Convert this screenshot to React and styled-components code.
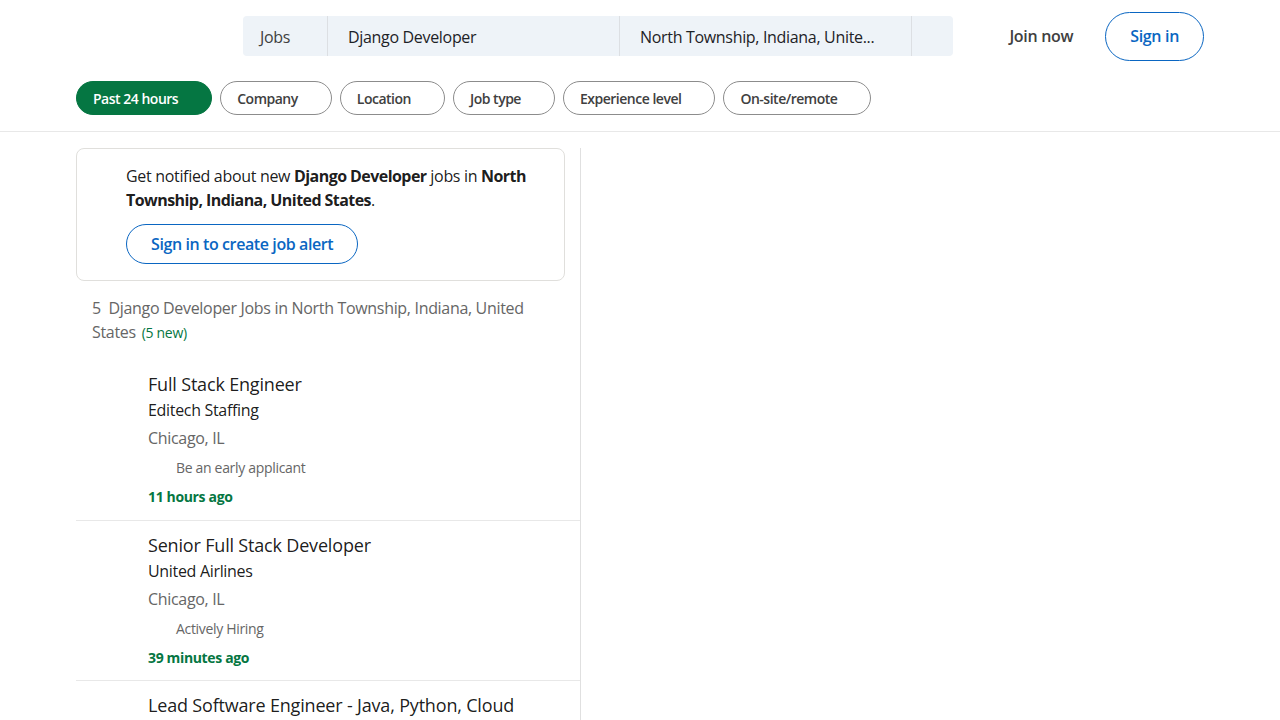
import styled, { createGlobalStyle } from "styled-components";

const GlobalStyle = createGlobalStyle`
  * { box-sizing: border-box; }
  body {
    margin: 0;
    background: #ffffff;
    font-family: "Open Sans", "Noto Sans", sans-serif;
    letter-spacing: -0.02em;
    color: rgba(0, 0, 0, 0.9);
  }
`;

const Page = styled.div`
  width: 1280px;
  min-height: 720px;
  overflow: hidden;
`;

const TopBar = styled.header`
  border-bottom: 1px solid #e8e8e8;
  padding: 0 76px 16px;
`;

const NavRow = styled.div`
  height: 72px;
  display: flex;
  align-items: center;
`;

const LogoSlot = styled.div`
  width: 167px;
  flex-shrink: 0;
`;

const SearchBar = styled.div`
  width: 710px;
  height: 40px;
  display: flex;
  background: #eef3f8;
  border-radius: 4px;
`;

const SearchField = styled.div`
  width: ${(p) => p.$w}px;
  flex-shrink: 0;
  display: flex;
  align-items: center;
  padding: 2px ${(p) => p.$pad}px 0;
  font-size: 16px;
  color: ${(p) => (p.$muted ? "#404040" : "#1d2226")};
  border-right: ${(p) => (p.$last ? "none" : "1px solid #dcdfe3")};
  white-space: nowrap;
  overflow: hidden;

  span {
    overflow: hidden;
    text-overflow: ellipsis;
  }
`;

const Spacer = styled.div`
  flex: 1;
`;

const JoinLink = styled.a`
  padding: 12px 24px;
  font-size: 16px;
  font-weight: 600;
  color: #404040;
  text-decoration: none;
`;

const SignInButton = styled.button`
  margin-left: 8px;
  height: 49px;
  padding: 0 24px;
  border: 1px solid #0a66c2;
  border-radius: 25px;
  background: #fff;
  color: #0a66c2;
  font-family: inherit;
  font-size: 16px;
  font-weight: 600;
  letter-spacing: -0.02em;
`;

const Filters = styled.div`
  margin-top: 9px;
  display: flex;
  gap: 8px;
`;

const Pill = styled.button`
  height: 34px;
  padding: 0 33px 0 16px;
  border-radius: 17px;
  font-family: inherit;
  font-size: 14px;
  font-weight: 600;
  letter-spacing: -0.035em;
  border: 1px solid ${(p) => (p.$active ? "#057642" : "#8c8c8c")};
  background: ${(p) => (p.$active ? "#057642" : "#fff")};
  color: ${(p) => (p.$active ? "#fff" : "#404040")};
`;

const Main = styled.main`
  padding: 16px 76px 0;
`;

const ListColumn = styled.section`
  width: 505px;
  border-right: 1px solid #e0e0e0;
`;

const AlertCard = styled.div`
  width: 489px;
  border: 1px solid #e0dfdc;
  border-radius: 8px;
  padding: 15px 16px 16px 49px;
`;

const AlertText = styled.p`
  margin: 0;
  font-size: 16px;
  line-height: 24px;
  color: rgba(0, 0, 0, 0.9);

  strong {
    font-weight: 700;
    letter-spacing: -0.035em;
  }
`;

const OutlineButton = styled.button`
  margin-top: 12px;
  height: 40px;
  padding: 0 24px;
  border: 1px solid #0a66c2;
  border-radius: 20px;
  background: #fff;
  color: #0a66c2;
  font-family: inherit;
  font-size: 16px;
  font-weight: 600;
  letter-spacing: -0.025em;
`;

const ResultsHeading = styled.h1`
  margin: 15px 0 0;
  padding: 0 16px;
  font-size: 16px;
  font-weight: 400;
  line-height: 24px;
  color: #666666;
`;

const NewCount = styled.span`
  margin-left: 6px;
  font-size: 14px;
  color: #057642;
`;

const JobList = styled.ul`
  list-style: none;
  margin: 16px 0 0;
  padding: 0;
`;

const JobCard = styled.li`
  padding: 12px 16px 12px 72px;
  border-bottom: 1px solid #e8e8e8;

  &:first-child {
    padding-top: 11px;
    padding-bottom: 13px;
  }
`;

const JobTitle = styled.h3`
  margin: 0;
  font-size: 18px;
  font-weight: 500;
  line-height: 24px;
  letter-spacing: -0.01em;
  color: rgba(0, 0, 0, 0.9);
`;

const Company = styled.h4`
  margin: 2px 0 0;
  font-size: 16px;
  font-weight: 400;
  line-height: 24px;
  color: rgba(0, 0, 0, 0.9);
`;

const Place = styled.div`
  margin-top: 4px;
  font-size: 16px;
  line-height: 24px;
  color: #666666;
`;

const Insight = styled.div`
  margin-top: 8px;
  padding-left: 28px;
  font-size: 14px;
  line-height: 20px;
  color: #666666;
`;

const Posted = styled.time`
  display: block;
  margin-top: 9px;
  font-size: 14px;
  font-weight: 700;
  line-height: 20px;
  letter-spacing: -0.025em;
  color: #057642;
`;

const filters = ["Company", "Location", "Job type", "Experience level", "On-site/remote"];

const jobs = [
  { title: "Full Stack Engineer", company: "Editech Staffing", place: "Chicago, IL", insight: "Be an early applicant", posted: "11 hours ago" },
  { title: "Senior Full Stack Developer", company: "United Airlines", place: "Chicago, IL", insight: "Actively Hiring", posted: "39 minutes ago" },
  { title: "Lead Software Engineer - Java, Python, Cloud", company: "Capital One", place: "Chicago, IL", insight: "Actively Hiring", posted: "2 hours ago" },
];

export default function App() {
  return (
    <Page>
      <GlobalStyle />
      <TopBar>
        <NavRow>
          <LogoSlot />
          <SearchBar>
            <SearchField $w={85} $pad={17} $muted>Jobs</SearchField>
            <SearchField $w={292} $pad={20}>Django Developer</SearchField>
            <SearchField $w={292} $pad={20}><span>North Township, Indiana, Unite...</span></SearchField>
            <SearchField $w={41} $pad={0} $last />
          </SearchBar>
          <Spacer />
          <JoinLink href="#">Join now</JoinLink>
          <SignInButton>Sign in</SignInButton>
        </NavRow>
        <Filters>
          <Pill $active>Past 24 hours</Pill>
          {filters.map((f) => (
            <Pill key={f}>{f}</Pill>
          ))}
        </Filters>
      </TopBar>

      <Main>
        <ListColumn>
          <AlertCard>
            <AlertText>
              Get notified about new <strong>Django Developer</strong> jobs in{" "}
              <strong>North Township, Indiana, United States</strong>.
            </AlertText>
            <OutlineButton>Sign in to create job alert</OutlineButton>
          </AlertCard>

          <ResultsHeading>
            5&nbsp; Django Developer Jobs in North Township, Indiana, United States
            <NewCount>(5 new)</NewCount>
          </ResultsHeading>

          <JobList>
            {jobs.map((j) => (
              <JobCard key={j.title}>
                <JobTitle>{j.title}</JobTitle>
                <Company>{j.company}</Company>
                <Place>{j.place}</Place>
                <Insight>{j.insight}</Insight>
                <Posted>{j.posted}</Posted>
              </JobCard>
            ))}
          </JobList>
        </ListColumn>
      </Main>
    </Page>
  );
}
